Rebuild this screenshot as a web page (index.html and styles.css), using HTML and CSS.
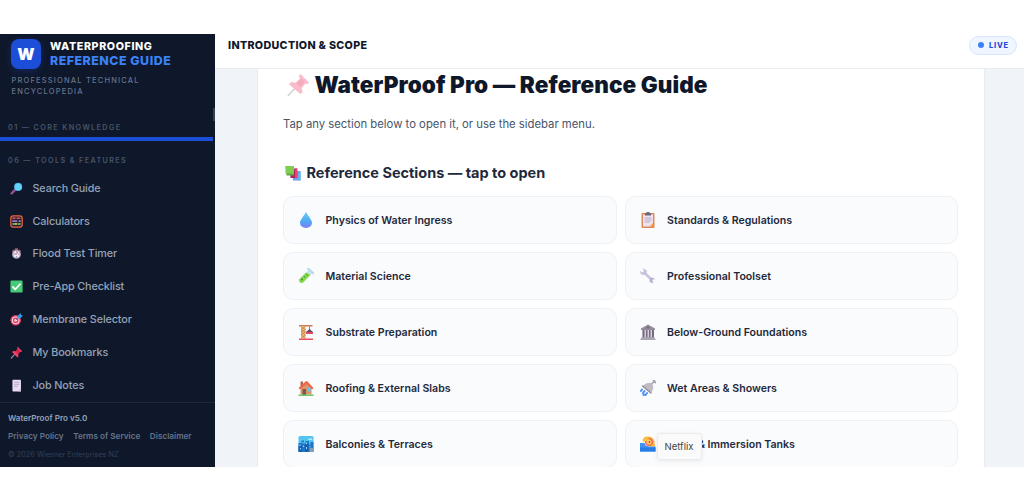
FILE: index.html
```html
<!doctype html>
<html lang="en">

<head>
    <meta charset="utf-8">
    <title>WaterProof Pro</title>
    <meta name="viewport" content="width=device-width,initial-scale=1">
    <link rel="stylesheet" href="styles.css">
</head>

<body>
    <div class="app">
        <aside class="sidebar">
            <div class="brand">
                <div class="logo">W</div>
                <div class="brand-text">
                    <div class="brand-top">WATERPROOFING</div>
                    <div class="brand-bottom">REFERENCE GUIDE</div>
                </div>
            </div>
            <div class="tagline">PROFESSIONAL TECHNICAL<br>ENCYCLOPEDIA</div>
            <div class="nav-label">01 — CORE KNOWLEDGE</div>
            <div class="nav-active"></div>
            <div class="nav-label tools">06 — TOOLS &amp; FEATURES</div>
            <nav class="nav">
                <a class="nav-item">
                    <svg viewBox="0 0 32 32"><path d="M4 28l9-9" stroke="#8d5590" stroke-width="6" stroke-linecap="round" /><circle cx="20" cy="12" r="10" fill="#4aa8d8" /><circle cx="20" cy="12" r="8.5" fill="#63d1f8" /></svg>
                    <span>Search Guide</span>
                </a>
                <a class="nav-item">
                    <svg viewBox="0 0 32 32"><rect x="2" y="2" width="28" height="28" rx="6" fill="#25202d" stroke="#f0643c" stroke-width="3" /><path d="M5 8h22M5 15h22M5 22h22" stroke="#b46c59" stroke-width="1.5" /><path d="M6 8h7m4 0h7" stroke="#d94b70" stroke-width="4" /><path d="M6 15h11m5 0h4" stroke="#8d75cf" stroke-width="4" /><path d="M6 22h6m7 0h7" stroke="#69c681" stroke-width="4" /><path d="M12 22h5" stroke="#f6ce52" stroke-width="4" /></svg>
                    <span>Calculators</span>
                </a>
                <a class="nav-item">
                    <svg viewBox="0 0 32 32"><path d="M12 3h8v5h-8zM5 9l4-3 3 4-5 4zM27 9l-4-3-3 4 5 4z" fill="#a75278" /><circle cx="16" cy="18" r="11" fill="#a8a0b5" /><circle cx="16" cy="18" r="8" fill="#eee9f5" /><path d="M16 18l4-7M16 18l-5-2" stroke="#d34b70" stroke-width="2" /><path d="M16 11v2M16 23v2M9 18h2M21 18h2" stroke="#5c5064" stroke-width="2" /></svg>
                    <span>Flood Test Timer</span>
                </a>
                <a class="nav-item">
                    <svg viewBox="0 0 32 32"><rect x="1" y="1" width="30" height="30" rx="3" fill="#45ca78" /><path d="M7 17l6 6L25 10" fill="none" stroke="#fff" stroke-width="4" stroke-linecap="round" stroke-linejoin="round" /></svg>
                    <span>Pre-App Checklist</span>
                </a>
                <a class="nav-item">
                    <svg viewBox="0 0 32 32"><circle cx="14" cy="18" r="13" fill="#e43c61" /><circle cx="14" cy="18" r="9.5" fill="#f4dce9" /><circle cx="14" cy="18" r="7" fill="#e43c61" /><circle cx="14" cy="18" r="3.5" fill="#f4dce9" /><path d="M14 18L25 7" stroke="#536f94" stroke-width="2" /><path d="M18 8l8-8 1 5 5 1-8 8-6-1z" fill="#3499df" /></svg>
                    <span>Membrane Selector</span>
                </a>
                <a class="nav-item">
                    <svg viewBox="0 0 32 32"><path d="M3 30l10-11" stroke="#a5a0b0" stroke-width="2.5" stroke-linecap="round" /><path d="M19 2l11 11-3 2-2-1-5 6 1 6-3 2L5 15l3-3 6 1 5-6-2-2z" fill="#f63c62" /><path d="M20 7l5 5-6 7-5-5z" fill="#d91f4d" /></svg>
                    <span>My Bookmarks</span>
                </a>
                <a class="nav-item">
                    <svg viewBox="0 0 32 32"><rect x="6" y="2" width="21" height="29" rx="2" fill="#e7dcf2" /><path d="M10 8h13M10 13h13M10 18h9" stroke="#a49aba" stroke-width="1.8" /><path d="M27 24v7h-7z" fill="#cdbddd" /></svg>
                    <span>Job Notes</span>
                </a>
            </nav>
            <footer class="side-footer">
                <div class="version">WaterProof Pro v5.0</div>
                <div class="links"><a>Privacy Policy</a><a>Terms of Service</a><a>Disclaimer</a></div>
                <div class="copyright">© 2026 Wiesner Enterprises NZ</div>
            </footer>
            <div class="scroll-thumb"></div>
        </aside>

        <main class="main">
            <header class="topbar">
                <div class="topbar-title">INTRODUCTION &amp; SCOPE</div>
                <div class="live"><i></i><span>LIVE</span></div>
            </header>
            <section class="panel">
                <h1>
                    <svg viewBox="0 0 32 32"><path d="M3 30l10-11" stroke="#d5d2d5" stroke-width="2.2" stroke-linecap="round" /><path d="M19 1l12 12-3 2-2-1-5 6 1 6-3 2L4 15l3-3 6 1 6-6-2-2z" fill="#fabccb" /><path d="M20 7l5 5-6 7-5-5z" fill="#f3acbf" /></svg>
                    <span>WaterProof Pro — Reference Guide</span>
                </h1>
                <p class="intro">Tap any section below to open it, or use the sidebar menu.</p>
                <h2>
                    <svg viewBox="0 0 32 32"><path d="M14 12h17v19H16z" fill="#6e9eea" /><path d="M27 14h4v17h-4z" fill="#57bbea" /><path d="M9 7h15v19H11z" fill="#a92861" /><path d="M20 7h5v19h-5z" fill="#ef3e6b" /><path d="M1 2h17v19H3z" fill="#61a744" /><path d="M1 2h17v15H1z" fill="#80ce50" /></svg>
                    <span>Reference Sections — tap to open</span>
                </h2>
                <div class="grid">
                    <a class="card">
                        <svg viewBox="0 0 32 32"><defs><linearGradient id="drop" x2="0" y2="1"><stop stop-color="#67caf5" /><stop offset=".6" stop-color="#51a8f4" /><stop offset="1" stop-color="#817cf0" /></linearGradient></defs><path d="M16 0C13 7 4 15 4 22a12 10 0 0 0 24 0C28 15 19 7 16 0z" fill="url(#drop)" /></svg>
                        <span>Physics of Water Ingress</span>
                    </a>
                    <a class="card">
                        <svg viewBox="0 0 32 32"><rect x="3" y="2" width="26" height="30" rx="2" fill="#dd8958" /><path d="M6 5h20v20l-4 4H6z" fill="#eee2f3" /><path d="M26 22v7h-7z" fill="#f6a24b" /><path d="M10 2h3V0h6v2h3v5H10z" fill="#71677b" /><path d="M9 12h14M9 16h14M9 20h11" stroke="#a69bb4" stroke-width="1.5" /></svg>
                        <span>Standards &amp; Regulations</span>
                    </a>
                    <a class="card">
                        <svg viewBox="0 0 32 32"><path d="M22 3l7 7L9 30q-7 1-7-7z" fill="#c6e4ef" /><path d="M16 9l9 5L9 30q-7 1-7-7z" fill="#8bda49" /><path d="M20 1l11 10" stroke="#b7d7ec" stroke-width="4" stroke-linecap="round" /><g fill="#408c46"><circle cx="8" cy="23" r="2" /><circle cx="13" cy="18" r="1.5" /><circle cx="18" cy="14" r="1.5" /></g></svg>
                        <span>Material Science</span>
                    </a>
                    <a class="card">
                        <svg viewBox="0 0 32 32"><path d="M8 9l17 16" stroke="#c8c1df" stroke-width="5" /><path d="M5 1l3 5-3 3-5-3q0 7 6 8 7 0 8-6 0-6-9-7z" fill="#c8c1da" /><path d="M22 20q5-2 9 3l-5-1-2 3 3 5q-6 1-8-4 0-4 3-6z" fill="#b5acc9" /></svg>
                        <span>Professional Toolset</span>
                    </a>
                    <a class="card">
                        <svg viewBox="0 0 32 32"><path d="M2 2h27v3H2z" fill="#c97b52" /><path d="M6 4h9v25H6z" fill="#f3bd72" /><path d="M6 5l9 6-9 5 9 6-9 6M15 5l-9 6 9 5-9 6 9 6" fill="none" stroke="#bd824f" stroke-width="1.5" /><path d="M23 5v7" stroke="#675369" stroke-width="1.5" /><path d="M23 10l7 6H16z" fill="#624865" /><path d="M16 16h14v4H16z" fill="#d54c62" /><path d="M2 29h28v3H2z" fill="#e94b61" /></svg>
                        <span>Substrate Preparation</span>
                    </a>
                    <a class="card">
                        <svg viewBox="0 0 32 32"><path d="M16 1L2 9v3h28V9z" fill="#928c99" /><path d="M5 12h22v15H5z" fill="#d6d1dc" /><path d="M5 12h4v15H5zM12 12h3v15h-3zM18 12h3v15h-3zM24 12h4v15h-4z" fill="#756a80" /><path d="M3 26h26v3H3zM1 29h30v3H1z" fill="#aaa3b1" /><circle cx="16" cy="7" r="2" fill="#686071" /></svg>
                        <span>Below-Ground Foundations</span>
                    </a>
                    <a class="card">
                        <svg viewBox="0 0 32 32"><path d="M5 3h5v10H5z" fill="#aa6857" /><path d="M5 14L16 5l11 10v14H5z" fill="#dc9666" /><path d="M1 16L15 3q2-2 4 0l12 13-3 3L17 8 4 19z" fill="#ed684b" /><path d="M9 18h7v12H9z" fill="#79594f" /><path d="M19 15h6v8h-6z" fill="#65c6f1" /><path d="M1 29h30v3H1z" fill="#6cc665" /></svg>
                        <span>Roofing &amp; External Slabs</span>
                    </a>
                    <a class="card">
                        <svg viewBox="0 0 32 32"><path d="M22 9l7-7M27 1l4 4" stroke="#a6a0ae" stroke-width="3.5" stroke-linecap="round" /><path d="M5 12Q14 4 22 6l4 4q2 8-4 16z" fill="#c0bbc4" /><path d="M5 12l17 14" stroke="#938d9a" stroke-width="3" stroke-linecap="round" /><path d="M4 19l-2 3M9 22l-3 4M14 26l-3 4M8 29l-1 1" stroke="#4d8ff8" stroke-width="4" stroke-linecap="round" /></svg>
                        <span>Wet Areas &amp; Showers</span>
                    </a>
                    <a class="card">
                        <svg viewBox="0 0 32 32"><rect x="1" width="30" height="32" rx="3" fill="#54c5f2" /><path d="M20 8q0-4 4-3 4-2 5 3z" fill="#b5e5fb" /><path d="M1 14h6V9h5v6h3v-5h7v7h3v-5h6v20H1z" fill="#1c76c8" /><path d="M1 20h7v12H1zM14 17h7v15h-7z" fill="#2559ab" /><path d="M4 17v3M10 12v3M17 13v3M11 19v3M24 20v3M17 22v4M5 24v3" stroke="#8edbf3" stroke-width="2" /><path d="M23 24h8v8h-8z" fill="#809fba" /></svg>
                        <span>Balconies &amp; Terraces</span>
                    </a>
                    <a class="card">
                        <svg viewBox="0 0 32 32"><path d="M6 7Q7 1 16 1q10 0 13 10l1 10H15z" fill="#f8b83c" /><circle cx="18" cy="12" r="8" fill="#ee7355" /><circle cx="18" cy="12" r="5" fill="#ffcd62" /><path d="M5 7l10-3 5 4-8 2-6 2z" fill="#ffc43f" /><circle cx="19" cy="12" r="2" fill="#d94667" /><path d="M0 14h9q1 6 8 7h14v10H0z" fill="#3f92f2" /><path d="M0 23h31v8H0z" fill="#287ce8" /></svg>
                        <span>Pools &amp; Immersion Tanks</span>
                    </a>
                </div>
            </section>
        </main>
        <div class="tooltip">Netflix</div>
    </div>
</body>

</html>
```
FILE: styles.css
```css
* {
    box-sizing: border-box;
}

body {
    margin: 0;
    padding-top: 33.5px;
    height: 500px;
    overflow: hidden;
    background: #fff;
    font-family: Inter, "Liberation Sans", sans-serif;
    white-space: nowrap;
}

svg {
    display: block;
    flex: none;
    fill: none;
}

.app {
    position: relative;
    display: flex;
    height: 433.5px;
    overflow: hidden;
}

.sidebar {
    position: relative;
    display: flex;
    flex-direction: column;
    flex: none;
    width: 215px;
    background: #0f172a;
}

.brand {
    display: flex;
    gap: 9px;
    padding: 5.5px 11px 0;
}

.logo {
    width: 30px;
    height: 30px;
    border-radius: 8px;
    background: #1d4ed8;
    box-shadow: 0 2px 7px rgba(29, 78, 216, 0.3);
    color: #fff;
    font-size: 16px;
    font-weight: 900;
    line-height: 30px;
    text-align: center;
}

.brand-text {
    font-weight: 800;
    line-height: 14px;
}

.brand-top {
    padding-top: 1px;
    color: #fff;
    font-size: 10.7px;
    letter-spacing: 0.6px;
}

.brand-bottom {
    color: #3b82f6;
    font-size: 12.4px;
    letter-spacing: 0.5px;
}

.tagline {
    margin: 6px 0 0 11.5px;
    color: #64748b;
    font-size: 7.5px;
    font-weight: 500;
    line-height: 11px;
    letter-spacing: 1.18px;
}

.nav-label {
    margin: 25px 0 0 8px;
    height: 12px;
    color: #475569;
    font-size: 7.2px;
    font-weight: 600;
    line-height: 12px;
    letter-spacing: 1.4px;
}

.nav-active {
    flex: none;
    width: 213px;
    height: 4px;
    margin-top: 3px;
    background: #1d4ed8;
}

.nav-label.tools {
    margin-top: 14px;
}

.nav {
    margin-top: 5px;
}

.nav-item {
    display: flex;
    align-items: center;
    gap: 9.5px;
    height: 32.8px;
    padding-left: 10px;
    color: #94a3b8;
    font-size: 10.8px;
    font-weight: 500;
    letter-spacing: -0.12px;
}

.nav-item svg {
    width: 13px;
    height: 13px;
}

.side-footer {
    position: relative;
    height: 66px;
    margin-top: auto;
    padding: 9px 8px 0;
    border-top: 1px solid #1e293b;
    background: #0f172a;
}

.version {
    color: #94a3b8;
    font-size: 8.1px;
    font-weight: 600;
    line-height: 12px;
}

.links {
    display: flex;
    gap: 9.5px;
    margin-top: 6.5px;
    color: #64748b;
    font-size: 8.2px;
    font-weight: 600;
    line-height: 12px;
}

.copyright {
    margin-top: 7px;
    color: #334155;
    font-size: 7.3px;
    line-height: 12px;
}

.scroll-thumb {
    position: absolute;
    top: 74px;
    right: 0;
    width: 2px;
    height: 13px;
    background: #334155;
}

.main {
    flex: 1;
    display: flex;
    flex-direction: column;
    background: #f0f4f9;
}

.topbar {
    display: flex;
    flex: none;
    align-items: center;
    justify-content: space-between;
    height: 35.5px;
    padding: 0 7px 11px 13px;
    border-bottom: 1px solid #e8edf3;
    background: #fff;
}

.topbar-title {
    color: #0f172a;
    font-size: 10.7px;
    font-weight: 800;
    letter-spacing: 0.33px;
}

.live {
    display: flex;
    align-items: center;
    gap: 5px;
    height: 19px;
    padding: 0 7px 0 8px;
    border: 1px solid #d8e5fe;
    border-radius: 10px;
    background: #eff6ff;
    color: #1d4ed8;
    font-size: 7.5px;
    font-weight: 800;
    letter-spacing: 0.8px;
}

.live i {
    width: 6px;
    height: 6px;
    border-radius: 50%;
    background: #3b82f6;
}

.panel {
    flex: 1;
    width: 728px;
    margin-left: 42px;
    padding: 0 26px 0 25px;
    border: 1px solid #e7ecf2;
    border-width: 0 1px;
    background: #fff;
}

h1,
h2 {
    display: flex;
    align-items: center;
    margin: 0;
}

h1 {
    gap: 4.5px;
    height: 31px;
    padding-left: 3px;
    color: #0f172a;
    font-size: 22.5px;
    font-weight: 900;
    letter-spacing: 0.07px;
}

h1 svg {
    width: 24px;
    height: 24px;
}

.intro {
    margin: 14.5px 0 0;
    color: #475569;
    font-size: 11.3px;
    line-height: 18px;
}

h2 {
    gap: 5.5px;
    height: 22px;
    margin-top: 29px;
    padding-left: 2px;
    color: #1e293b;
    font-size: 14.5px;
    font-weight: 700;
}

h2 svg {
    width: 16px;
    height: 16px;
}

.grid {
    display: grid;
    grid-template-columns: 1fr 1fr;
    grid-auto-rows: 48px;
    gap: 8px;
    margin-top: 12.5px;
}

.card {
    display: flex;
    align-items: center;
    gap: 11.5px;
    padding-left: 14px;
    border: 1px solid #edf1f6;
    border-radius: 10px;
    background: #f9fbfd;
    color: #1e293b;
    font-size: 10.6px;
    font-weight: 600;
}

.card svg {
    width: 16px;
    height: 16px;
}

.tooltip {
    position: absolute;
    left: 656.5px;
    top: 399px;
    width: 45px;
    height: 27px;
    border: 1px solid #ececec;
    border-radius: 3px;
    background: #fafafa;
    box-shadow: 0 1px 4px rgba(0, 0, 0, 0.08);
    color: #444;
    font-size: 9.5px;
    line-height: 25px;
    text-align: center;
}
```
